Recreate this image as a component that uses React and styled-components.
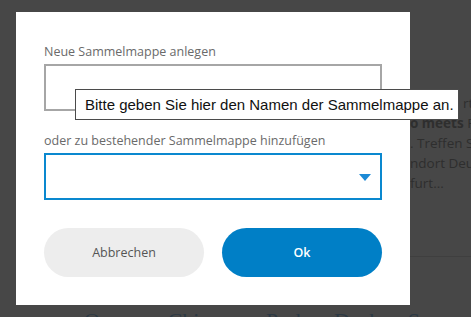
import React from "react";
import styled, { createGlobalStyle } from "styled-components";

const GlobalStyle = createGlobalStyle`
  html, body { margin: 0; padding: 0; }
  body {
    background: #474747;
    overflow: hidden;
    font-family: "Open Sans", "Noto Sans", sans-serif;
  }
`;

const Page = styled.div`
  position: relative;
  width: 471px;
  height: 317px;
  overflow: hidden;
  background: #474747;
`;

const BackColumn = styled.div`
  padding: 93px 0 0 410px;
  display: flex;
  flex-direction: column;
  font-family: "Open Sans", sans-serif;
  font-size: 13.5px;
  line-height: 20px;
  color: #2e2e2e;
  white-space: nowrap;
`;

const BackLine = styled.div`
  b { font-weight: 700; }
`;

const BackDivider = styled.div`
  margin: 63px 0 0 410px;
  height: 1px;
  background: #3f3f3f;
`;

const BackHeadline = styled.div`
  margin: 51px 0 0 84px;
  font-family: "Liberation Serif", serif;
  font-size: 22px;
  color: #2c3944;
  white-space: nowrap;
  word-spacing: 22px;
`;

const Overlay = styled.div`
  position: absolute;
  inset: 0;
  padding: 12px 0 0 16px;
`;

const Dialog = styled.div`
  width: 394px;
  box-sizing: border-box;
  background: #ffffff;
  padding: 31px 28px 28px;
  display: flex;
  flex-direction: column;
`;

const Label = styled.div`
  font-size: 12.5px;
  line-height: 18px;
  color: #6a6a6a;
  margin-bottom: 3px;
`;

const TextInput = styled.div`
  height: 47px;
  box-sizing: border-box;
  border: 2px solid #a6a6a6;
  margin-bottom: 21px;
`;

const Select = styled.div`
  height: 47px;
  box-sizing: border-box;
  border: 2px solid #0a88cf;
  display: flex;
  align-items: center;
  justify-content: flex-end;
  padding-right: 9px;
  margin-bottom: 28px;
`;

const Arrow = styled.div`
  width: 0;
  height: 0;
  border-left: 6px solid transparent;
  border-right: 6px solid transparent;
  border-top: 7px solid #1c8ad6;
  margin-top: 1px;
`;

const Buttons = styled.div`
  display: grid;
  grid-template-columns: 1fr 1fr;
  gap: 18px;
`;

const Button = styled.button`
  height: 49px;
  border: none;
  border-radius: 25px;
  font-family: "Open Sans", sans-serif;
  font-size: 12.5px;
  background: ${(p) => (p.$primary ? "#007fc6" : "#ededed")};
  color: ${(p) => (p.$primary ? "#ffffff" : "#555555")};
  font-weight: ${(p) => (p.$primary ? 600 : 400)};
  padding: 0;
`;

const Tooltip = styled.div`
  position: absolute;
  left: 75px;
  top: 89px;
  width: 384px;
  height: 31px;
  box-sizing: border-box;
  border: 1px solid #4b4b4b;
  background: #ffffff;
  display: flex;
  align-items: center;
  padding: 0 9px;
  font-family: "Liberation Sans", Arial, sans-serif;
  font-size: 15px;
  color: #111111;
  white-space: nowrap;
`;

export default function App() {
  return (
    <>
      <GlobalStyle />
      <Page>
        <BackColumn>
          <BackLine>Jetzt sta rt</BackLine>
          <BackLine><b>o meets</b> F</BackLine>
          <BackLine>. Treffen Si</BackLine>
          <BackLine>ndort Deu</BackLine>
          <BackLine>furt...</BackLine>
        </BackColumn>
        <BackDivider />
        <BackHeadline>Ocean Chinese Park Dach Sommer</BackHeadline>
        <Overlay>
          <Dialog>
            <Label>Neue Sammelmappe anlegen</Label>
            <TextInput />
            <Label>oder zu bestehender Sammelmappe hinzufügen</Label>
            <Select>
              <Arrow />
            </Select>
            <Buttons>
              <Button>Abbrechen</Button>
              <Button $primary>Ok</Button>
            </Buttons>
          </Dialog>
          <Tooltip>Bitte geben Sie hier den Namen der Sammelmappe an.</Tooltip>
        </Overlay>
      </Page>
    </>
  );
}
